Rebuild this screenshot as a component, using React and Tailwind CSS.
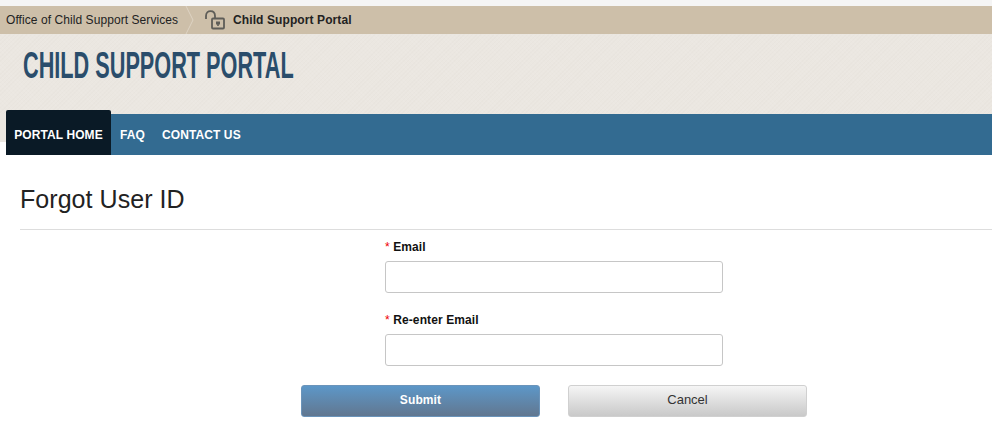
const sans = 'font-["Liberation_Sans",Arial,sans-serif]'

function LockIcon() {
  return (
    <svg width="22" height="20" viewBox="0 0 22 20" fill="none" className="shrink-0">
      <path d="M2 9 V6 C2 2.5 4.5 1.2 6.5 1.2 C9 1.2 11 3 11 6 V8" stroke="#5e5d58" strokeWidth="1.8" />
      <rect x="8" y="8.5" width="12" height="10" rx="1" stroke="#5e5d58" strokeWidth="1.8" />
      <rect x="12" y="11.5" width="4" height="3" fill="#5e5d58" />
      <rect x="13.2" y="13.5" width="1.6" height="2.5" fill="#5e5d58" />
    </svg>
  )
}

function Field({ label, mb }) {
  return (
    <div className={`flex flex-col ${mb}`}>
      <label className="text-xs font-bold text-[#111] leading-[15px] mb-[6px] tracking-[0.1px]">
        <span className="text-[#e00] font-normal">*</span> {label}
      </label>
      <input className="w-[338px] h-8 bg-white border border-[#c6c6c6] rounded-[3px]" />
    </div>
  )
}

export default function App() {
  return (
    <div className={`w-[992px] h-[436px] overflow-hidden bg-white ${sans}`}>
      <div className="h-[6px] bg-[#f5f5f5]" />

      {/* breadcrumb bar */}
      <div className="h-7 bg-[#cdbfa9] flex items-center text-xs text-[#222]">
        <span className="pl-[6px] w-[180px] tracking-[0.07px] whitespace-nowrap">Office of Child Support Services</span>
        <svg width="14" height="28" viewBox="0 0 14 28" fill="none" className="shrink-0">
          <path d="M6 0 L13 14 L6 28" stroke="#ddd3c3" strokeWidth="1" />
        </svg>
        <span className="ml-[10px]"><LockIcon /></span>
        <span className="ml-[7px] font-bold tracking-[0.1px]">Child Support Portal</span>
      </div>

      {/* header */}
      <div className="h-20 pl-[23px] pt-[12px] bg-[#ebe7e1] bg-[repeating-linear-gradient(45deg,rgba(255,255,255,0.05)_0_1px,transparent_1px_3px),repeating-linear-gradient(-45deg,rgba(120,105,90,0.02)_0_1px,transparent_1px_3px)]">
        <h1 className="inline-block origin-left scale-x-[0.586] whitespace-nowrap text-[37px] leading-[40px] font-bold text-[#2a4d6b]">
          CHILD SUPPORT PORTAL
        </h1>
      </div>

      {/* nav */}
      <div className="flex h-[41px]">
        <div className="w-[6px] h-7 bg-[#ebe7e1]" />
        <div className="flex-1 bg-[#336b91] flex items-center text-xs font-bold text-white tracking-[0.1px]">
          <div className="w-[105px] h-[45px] -mt-1 pt-1 self-end bg-[#0a1a26] rounded-t-[2px] flex items-center justify-center">
            PORTAL HOME
          </div>
          <span className="ml-[9px]">FAQ</span>
          <span className="ml-[17px]">CONTACT US</span>
        </div>
      </div>

      {/* content */}
      <div className="pl-5">
        <h2 className="text-[25px] leading-7 tracking-[0.05px] text-[#222] pt-[30px] pb-[16px] border-b border-[#ddd]">Forgot User ID</h2>
      </div>
      <div className="pl-[385px] pt-[10px]">
        <Field label="Email" mb="mb-5" />
        <Field label="Re-enter Email" mb="mb-[19px]" />
      </div>
      <div className="pl-[301px] flex gap-7">
        <button className="w-[239px] h-8 pb-[3px] rounded-[3px] border border-[#6b94ba] bg-gradient-to-b from-[#5c97c8] to-[#617790] text-xs font-bold text-white tracking-[0.1px]">
          Submit
        </button>
        <button className="w-[239px] h-8 pb-[3px] rounded-[3px] border border-[#d0d0d0] bg-gradient-to-b from-[#f5f5f5] to-[#c9c9c9] text-[13px] text-[#333]">
          Cancel
        </button>
      </div>
    </div>
  )
}
